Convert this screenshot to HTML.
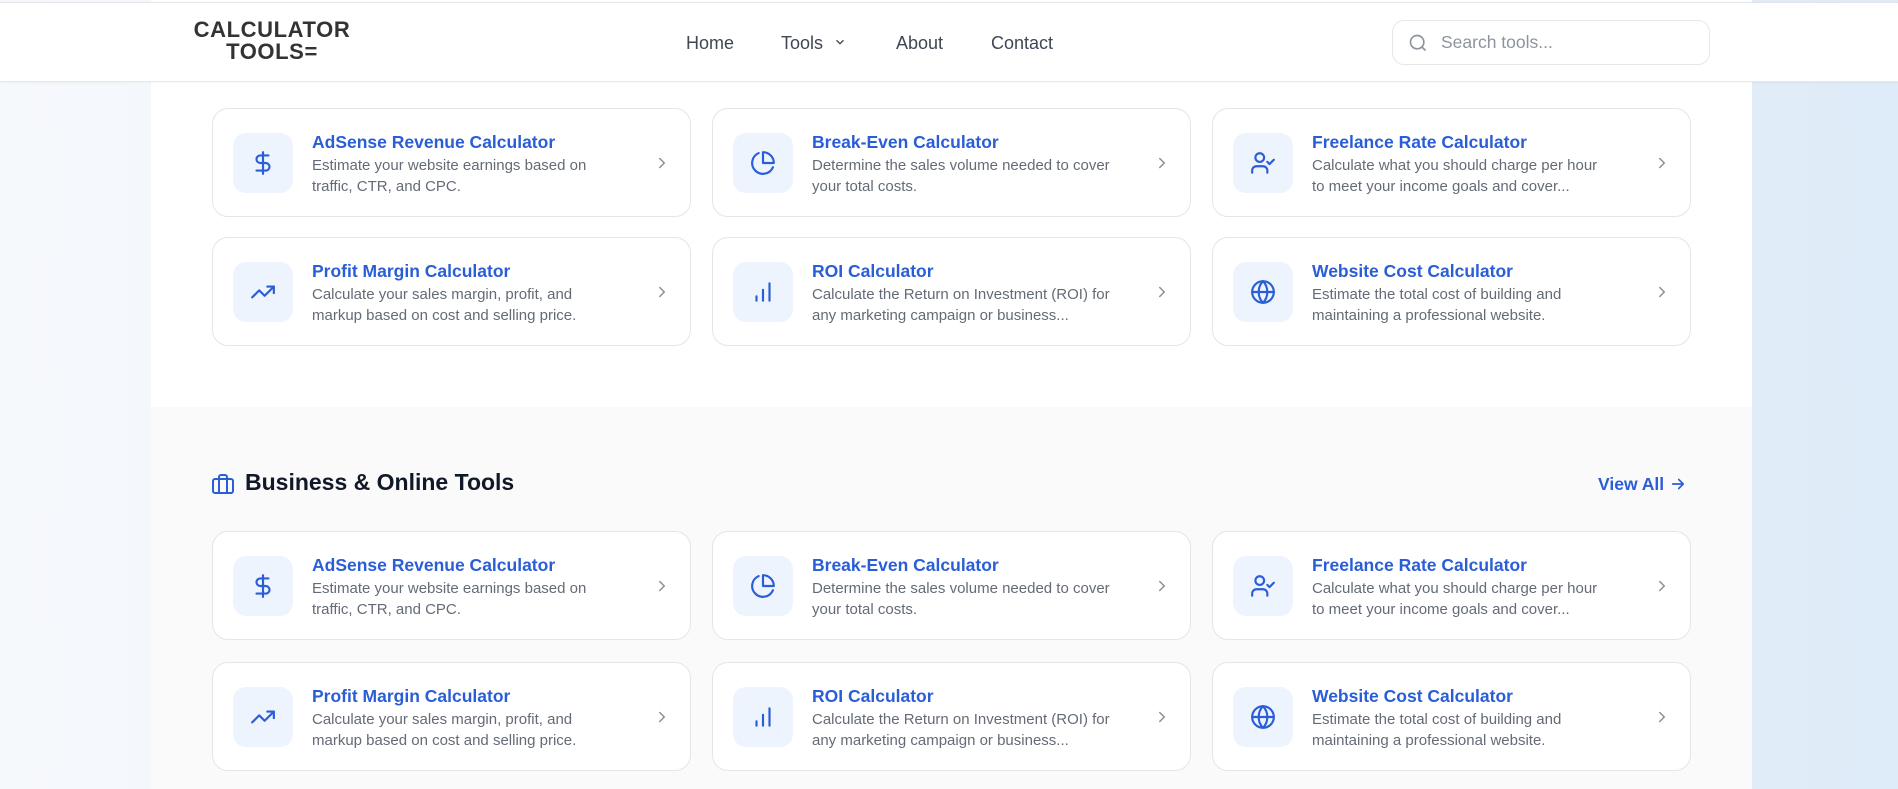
<!DOCTYPE html>
<html><head><meta charset="utf-8"><style>
*{box-sizing:border-box;margin:0;padding:0}
body{width:1898px;height:789px;overflow:hidden;position:relative;font-family:"Liberation Sans",sans-serif;background:linear-gradient(90deg,#f6f9fc 0%,#eef4fb 40%,#e4eef9 80%,#deebf8 100%)}
.header{position:absolute;left:0;top:2px;width:1898px;height:80px;background:#fff;border-top:1px solid #e3e5e8;border-bottom:1px solid #e5e7eb;box-shadow:0 1px 3px rgba(0,0,0,.04);z-index:5}
.logo{position:absolute;left:190px;top:16px;width:164px;text-align:center;font-weight:bold;font-size:22px;line-height:22px;color:#333;letter-spacing:0.6px}
.nav{position:absolute;top:30px;font-size:18px;color:#3f4755}
.search{position:absolute;left:1392px;top:17px;width:318px;height:45px;border:1px solid #e5e7eb;border-radius:12px;background:#fff}
.search span{position:absolute;left:48px;top:11px;font-size:17.5px;color:#8e949d}
.panel{position:absolute;left:151px;top:0;width:1601px;height:789px;background:#fff}
.gray{position:absolute;left:151px;top:407px;width:1601px;height:382px;background:#fafafa}
.card{position:absolute;width:479px;height:109px;border:1px solid #e3e5e8;border-radius:16px;background:#fff}
.ib{position:absolute;left:20px;top:24px;width:60px;height:60px;border-radius:13px;background:#eef4fe}
.ib svg{position:absolute;left:17px;top:17px}
.t{position:absolute;left:99px;top:21px;font-size:17.5px;font-weight:bold;color:#2a5ed6;line-height:24px;white-space:nowrap}
.d{position:absolute;left:99px;top:46px;width:302px;font-size:15px;line-height:21px;color:#646b76}
.ch{position:absolute;left:440px;top:45px}
.h{position:absolute;left:245px;top:469px;font-size:23px;font-weight:bold;color:#111827}
.va{position:absolute;left:1598px;top:474px;font-size:17.5px;font-weight:bold;color:#2a5ed6}
</style></head><body>
<div class="panel"></div>
<div class="gray"></div>
<div class="header">
<div class="logo">CALCULATOR<br>TOOLS=</div>
<div class="nav" style="left:686px">Home</div>
<div class="nav" style="left:781px">Tools <svg width="14" height="14" viewBox="0 0 24 24" fill="none" stroke="#3f4755" stroke-width="2.2" style="vertical-align:0px;margin-left:5px"><path d="M6 9l6 6 6-6"/></svg></div>
<div class="nav" style="left:896px">About</div>
<div class="nav" style="left:991px">Contact</div>
<div class="search"><svg style="position:absolute;left:15px;top:12px" width="20" height="20" viewBox="0 0 24 24" fill="none" stroke="#8e949d" stroke-width="2"><circle cx="11" cy="11" r="8"/><path d="M21 21l-4.3-4.3"/></svg><span>Search tools...</span></div>
</div>

<svg style="position:absolute;left:211px;top:472px" width="24" height="24" viewBox="0 0 24 24" fill="none" stroke="#2a5ed6" stroke-width="2" stroke-linecap="round" stroke-linejoin="round"><rect x="2" y="7" width="20" height="14" rx="2"/><path d="M16 21V5a2 2 0 0 0-2-2h-4a2 2 0 0 0-2 2v16"/></svg>
<div class="h">Business &amp; Online Tools</div>
<div class="va">View All <svg width="18" height="18" viewBox="0 0 24 24" fill="none" stroke="#2a5ed6" stroke-width="2.2" stroke-linecap="round" stroke-linejoin="round" style="vertical-align:-3px"><path d="M5 12h14M13 6l6 6-6 6"/></svg></div>

<div id="cards"></div>
<script>
const S='fill="none" stroke="#2a5ed6" stroke-width="2" stroke-linecap="round" stroke-linejoin="round"';
const ic={
d:'<path d="M12 2v20"/><path d="M17 5H9.5a3.5 3.5 0 0 0 0 7h5a3.5 3.5 0 0 1 0 7H6"/>',
p:'<path d="M21.21 15.89A10 10 0 1 1 8 2.83"/><path d="M22 12A10 10 0 0 0 12 2v10z"/>',
u:'<path d="M16 21v-2a4 4 0 0 0-4-4H6a4 4 0 0 0-4 4v2"/><circle cx="9" cy="7" r="4"/><polyline points="16 11 18 13 22 9"/>',
t:'<polyline points="22 7 13.5 15.5 8.5 10.5 2 17"/><polyline points="16 7 22 7 22 13"/>',
b:'<path d="M12 20V10"/><path d="M18 20V4"/><path d="M6 20v-4"/>',
g:'<circle cx="12" cy="12" r="10"/><path d="M12 2a14.5 14.5 0 0 0 0 20 14.5 14.5 0 0 0 0-20"/><path d="M2 12h20"/>'};
const data=[
['d','AdSense Revenue Calculator','Estimate your website earnings based on<br>traffic, CTR, and CPC.'],
['p','Break-Even Calculator','Determine the sales volume needed to cover<br>your total costs.'],
['u','Freelance Rate Calculator','Calculate what you should charge per hour<br>to meet your income goals and cover...'],
['t','Profit Margin Calculator','Calculate your sales margin, profit, and<br>markup based on cost and selling price.'],
['b','ROI Calculator','Calculate the Return on Investment (ROI) for<br>any marketing campaign or business...'],
['g','Website Cost Calculator','Estimate the total cost of building and<br>maintaining a professional website.']];
const xs=[212,712,1212],ys=[108,237,531,662];
let h='';
for(let r=0;r<4;r++)for(let c=0;c<3;c++){const k=data[(r%2)*3+c];
h+=`<div class="card" style="left:${xs[c]}px;top:${ys[r]}px"><div class="ib"><svg width="26" height="26" viewBox="0 0 24 24" ${S}>${ic[k[0]]}</svg></div><div class="t">${k[1]}</div><div class="d" style="width:340px">${k[2]}</div><svg class="ch" width="18" height="18" viewBox="0 0 24 24" fill="none" stroke="#8a9099" stroke-width="2" stroke-linecap="round"><path d="M9 6l6 6-6 6"/></svg></div>`;}
document.getElementById('cards').innerHTML=h;
</script>
</body></html>
